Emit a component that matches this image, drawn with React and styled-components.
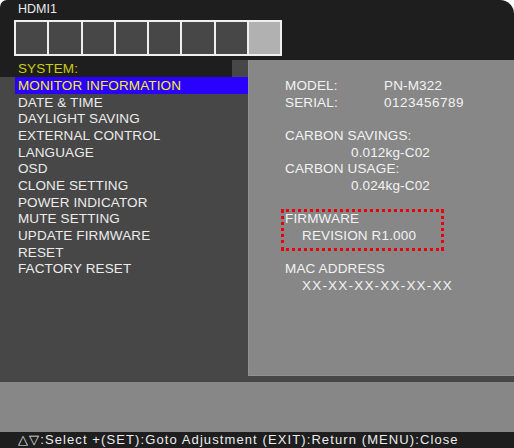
import { createGlobalStyle, styled } from "styled-components";

const GlobalStyle = createGlobalStyle`
  body {
    margin: 0;
    background: #ffffff;
    font-family: "Liberation Sans", Arial, sans-serif;
  }
`;

const menuItems = [
  "MONITOR INFORMATION",
  "DATE & TIME",
  "DAYLIGHT SAVING",
  "EXTERNAL CONTROL",
  "LANGUAGE",
  "OSD",
  "CLONE SETTING",
  "POWER INDICATOR",
  "MUTE SETTING",
  "UPDATE FIRMWARE",
  "RESET",
  "FACTORY RESET",
];

const App = () => {
  return (
    <>
      <GlobalStyle />
      <Osd>
        <Header>
          <SourceName>HDMI1</SourceName>
          <Meter>
            {Array.from({ length: 8 }).map((_, i) => (
              <MeterCell key={i} $lit={i === 7} />
            ))}
          </Meter>
        </Header>

        <Body>
          <MenuColumn>
            <SectionTitle>SYSTEM:</SectionTitle>
            {menuItems.map((item, i) => (
              <MenuItem key={item} $active={i === 0}>
                {item}
              </MenuItem>
            ))}
          </MenuColumn>

          <InfoPanel>
            <InfoRow>
              <Label>MODEL:</Label>
              <Value>PN-M322</Value>
            </InfoRow>
            <InfoRow>
              <Label>SERIAL:</Label>
              <Value $wide>0123456789</Value>
            </InfoRow>
            <Spacer />
            <Line>CARBON SAVINGS:</Line>
            <Line $indent={66}>0.012kg-C02</Line>
            <Line>CARBON USAGE:</Line>
            <Line $indent={66}>0.024kg-C02</Line>
            <Spacer />
            <Highlight>
              <Line>FIRMWARE</Line>
              <Line $indent={17}>REVISION R1.000</Line>
              <DottedFrame />
            </Highlight>
            <Spacer />
            <Line>MAC ADDRESS</Line>
            <Line $indent={17} $spacing={1.2}>
              XX-XX-XX-XX-XX-XX
            </Line>
          </InfoPanel>
        </Body>

        <InfoBar />

        <HelpBar>
          △▽:Select +(SET):Goto Adjustment (EXIT):Return (MENU):Close
        </HelpBar>
      </Osd>
    </>
  );
};

const ROW = "16.67px";

const Osd = styled.div`
  width: 514px;
  height: 448px;
  background: #1e1e1e;
  border-radius: 7px 14px 0 0;
  overflow: hidden;
  display: flex;
  flex-direction: column;
`;

const Header = styled.div`
  height: 60px;
  box-sizing: border-box;
  padding: 2px 0 0 14px;
`;

const SourceName = styled.div`
  padding-left: 4px;
  height: 14px;
  line-height: 14px;
  font-size: 12.5px;
  color: #ececec;
  margin-bottom: 4px;
`;

const Meter = styled.div`
  display: inline-flex;
  gap: 2px;
  border: 2px solid #efefef;
  background: #efefef;
`;

const MeterCell = styled.div`
  width: 31.3px;
  height: 32px;
  background: ${(p) => (p.$lit ? "#b1b1b1" : "#474747")};
`;

const Body = styled.div`
  height: 322px;
  display: grid;
  grid-template-columns: 248px 266px;
  background: #474747;
`;

const MenuColumn = styled.div`
  display: flex;
  flex-direction: column;
  font-size: 13.5px;
  letter-spacing: 0.12px;
`;

const SectionTitle = styled.div`
  height: 17px;
  line-height: 17px;
  margin-right: 16px;
  padding-left: 18px;
  background: #1e1e1e;
  color: #cccc10;
`;

const MenuItem = styled.div`
  height: ${ROW};
  line-height: ${ROW};
  margin-left: 15px;
  padding-left: 3px;
  padding-top: 1px;
  box-sizing: border-box;
  white-space: nowrap;
  background: ${(p) => (p.$active ? "#2a00ff" : "transparent")};
  color: ${(p) => (p.$active ? "#f4f020" : "#ececec")};
`;

const InfoPanel = styled.div`
  margin-bottom: 6px;
  padding: 17px 0 0 36px;
  background: #878787;
  border-left: 1px solid #929292;
  border-bottom: 1px solid #929292;
  font-size: 13.5px;
  letter-spacing: 0.15px;
  color: #f3f3f3;
`;

const InfoRow = styled.div`
  display: grid;
  grid-template-columns: 99px 1fr;
  height: ${ROW};
  line-height: ${ROW};
  padding-top: 1px;
  box-sizing: border-box;
`;

const Label = styled.span``;

const Value = styled.span`
  letter-spacing: ${(p) => (p.$wide ? "0.5px" : "0.15px")};
`;

const Line = styled.div`
  height: ${ROW};
  line-height: ${ROW};
  padding-top: 1px;
  padding-left: ${(p) => p.$indent || 0}px;
  letter-spacing: ${(p) => p.$spacing || 0.15}px;
  box-sizing: border-box;
  white-space: nowrap;
`;

const Spacer = styled.div`
  height: ${ROW};
`;

const Highlight = styled.div`
  position: relative;
`;

const DottedFrame = styled.div`
  position: absolute;
  left: -4px;
  top: -1px;
  width: 163px;
  height: 42px;
  box-sizing: border-box;
  border: 3px dotted #e8000a;
`;

const InfoBar = styled.div`
  height: 50px;
  background: #878787;
`;

const HelpBar = styled.div`
  height: 16px;
  line-height: 16px;
  padding-left: 18px;
  font-size: 13px;
  letter-spacing: 1.1px;
  color: #ececec;
  white-space: nowrap;
`;

export default App;
